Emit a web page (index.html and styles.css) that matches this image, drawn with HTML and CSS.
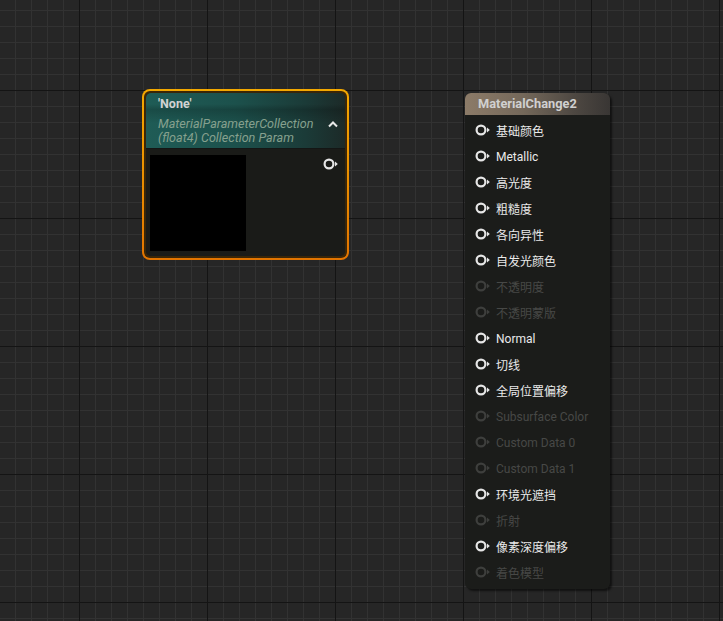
FILE: index.html
```html
<!DOCTYPE html>
<html>
<head>
<meta charset="utf-8">
<link rel="stylesheet" href="styles.css">
</head>
<body>
<div class="canvas">
  <div class="node-select">
    <div class="node-gap">
      <div class="node mpc">
        <div class="mpc-head">
          <div class="mpc-text">
            <div class="mpc-title">'None'</div>
            <div class="mpc-sub">MaterialParameterCollection<br>(float4) Collection Param</div>
          </div>
          <svg class="chev" width="12" height="8" viewBox="0 0 12 8"><path d="M2 6.5 L6 2.5 L10 6.5" fill="none" stroke="#e8e8e8" stroke-width="2"/></svg>
        </div>
        <div class="mpc-body">
          <div class="preview"></div>
          <svg class="pin out" width="16" height="12" viewBox="0 0 16 12"><circle cx="6" cy="6" r="4.4" fill="none" stroke="#e6e6e6" stroke-width="2.2"/><polygon points="12,3.5 14.8,6 12,8.5" fill="#e6e6e6"/></svg>
        </div>
      </div>
    </div>
  </div>

  <div class="node result">
    <div class="result-head">MaterialChange2</div>
    <ul class="pins">
      <li class="row"><svg class="pin" width="16" height="12" viewBox="0 0 16 12"><circle cx="6" cy="6" r="4.4"/><polygon points="12,3.5 14.8,6 12,8.5"/></svg><span class="cjk">基础颜色</span></li>
      <li class="row"><svg class="pin" width="16" height="12" viewBox="0 0 16 12"><circle cx="6" cy="6" r="4.4"/><polygon points="12,3.5 14.8,6 12,8.5"/></svg><span>Metallic</span></li>
      <li class="row"><svg class="pin" width="16" height="12" viewBox="0 0 16 12"><circle cx="6" cy="6" r="4.4"/><polygon points="12,3.5 14.8,6 12,8.5"/></svg><span class="cjk">高光度</span></li>
      <li class="row"><svg class="pin" width="16" height="12" viewBox="0 0 16 12"><circle cx="6" cy="6" r="4.4"/><polygon points="12,3.5 14.8,6 12,8.5"/></svg><span class="cjk">粗糙度</span></li>
      <li class="row"><svg class="pin" width="16" height="12" viewBox="0 0 16 12"><circle cx="6" cy="6" r="4.4"/><polygon points="12,3.5 14.8,6 12,8.5"/></svg><span class="cjk">各向异性</span></li>
      <li class="row"><svg class="pin" width="16" height="12" viewBox="0 0 16 12"><circle cx="6" cy="6" r="4.4"/><polygon points="12,3.5 14.8,6 12,8.5"/></svg><span class="cjk">自发光颜色</span></li>
      <li class="row off"><svg class="pin" width="16" height="12" viewBox="0 0 16 12"><circle cx="6" cy="6" r="4.4"/><polygon points="12,3.5 14.8,6 12,8.5"/></svg><span class="cjk">不透明度</span></li>
      <li class="row off"><svg class="pin" width="16" height="12" viewBox="0 0 16 12"><circle cx="6" cy="6" r="4.4"/><polygon points="12,3.5 14.8,6 12,8.5"/></svg><span class="cjk">不透明蒙版</span></li>
      <li class="row"><svg class="pin" width="16" height="12" viewBox="0 0 16 12"><circle cx="6" cy="6" r="4.4"/><polygon points="12,3.5 14.8,6 12,8.5"/></svg><span>Normal</span></li>
      <li class="row"><svg class="pin" width="16" height="12" viewBox="0 0 16 12"><circle cx="6" cy="6" r="4.4"/><polygon points="12,3.5 14.8,6 12,8.5"/></svg><span class="cjk">切线</span></li>
      <li class="row"><svg class="pin" width="16" height="12" viewBox="0 0 16 12"><circle cx="6" cy="6" r="4.4"/><polygon points="12,3.5 14.8,6 12,8.5"/></svg><span class="cjk">全局位置偏移</span></li>
      <li class="row off"><svg class="pin" width="16" height="12" viewBox="0 0 16 12"><circle cx="6" cy="6" r="4.4"/><polygon points="12,3.5 14.8,6 12,8.5"/></svg><span>Subsurface Color</span></li>
      <li class="row off"><svg class="pin" width="16" height="12" viewBox="0 0 16 12"><circle cx="6" cy="6" r="4.4"/><polygon points="12,3.5 14.8,6 12,8.5"/></svg><span>Custom Data 0</span></li>
      <li class="row off"><svg class="pin" width="16" height="12" viewBox="0 0 16 12"><circle cx="6" cy="6" r="4.4"/><polygon points="12,3.5 14.8,6 12,8.5"/></svg><span>Custom Data 1</span></li>
      <li class="row"><svg class="pin" width="16" height="12" viewBox="0 0 16 12"><circle cx="6" cy="6" r="4.4"/><polygon points="12,3.5 14.8,6 12,8.5"/></svg><span class="cjk">环境光遮挡</span></li>
      <li class="row off"><svg class="pin" width="16" height="12" viewBox="0 0 16 12"><circle cx="6" cy="6" r="4.4"/><polygon points="12,3.5 14.8,6 12,8.5"/></svg><span class="cjk">折射</span></li>
      <li class="row"><svg class="pin" width="16" height="12" viewBox="0 0 16 12"><circle cx="6" cy="6" r="4.4"/><polygon points="12,3.5 14.8,6 12,8.5"/></svg><span class="cjk">像素深度偏移</span></li>
      <li class="row off"><svg class="pin" width="16" height="12" viewBox="0 0 16 12"><circle cx="6" cy="6" r="4.4"/><polygon points="12,3.5 14.8,6 12,8.5"/></svg><span class="cjk">着色模型</span></li>
    </ul>
  </div>
</div>
</body>
</html>
```

FILE: styles.css
```css
html, body {
  margin: 0;
  padding: 0;
}
body {
  width: 723px;
  height: 621px;
  overflow: hidden;
  font-family: Roboto, "Noto Sans CJK SC", sans-serif;
  font-size: 12px;
}
.canvas {
  position: relative;
  width: 723px;
  height: 621px;
  background-color: #262626;
  background-image:
    linear-gradient(90deg, #141414 1px, transparent 1px),
    linear-gradient(#141414 1px, transparent 1px),
    linear-gradient(90deg, #323232 1px, transparent 1px),
    linear-gradient(#323232 1px, transparent 1px);
  background-size: 128px 128px, 128px 128px, 16px 16px, 16px 16px;
  background-position: 79px 90px, 79px 90px, 15px 10px, 15px 10px;
}

/* selected MPC node */
.node-select {
  position: absolute;
  left: 142px;
  top: 89px;
  width: 207px;
  height: 171px;
  box-sizing: border-box;
  padding: 2px;
  border-radius: 8px;
  background: linear-gradient(180deg, #f3a800 0%, #eb9000 50%, #e27400 100%);
}
.node-gap {
  height: 100%;
  box-sizing: border-box;
  padding: 2px;
  border-radius: 6px;
  background: #3a2608;
}
.node {
  border-radius: 5px;
  overflow: hidden;
  background: #1b1c1a;
}
.mpc {
  height: 100%;
  display: flex;
  flex-direction: column;
}
.mpc-head {
  height: 56px;
  box-sizing: border-box;
  padding: 3px 6px 0 12px;
  display: flex;
  justify-content: space-between;
  align-items: flex-start;
  background:
    linear-gradient(180deg, rgba(0,0,0,0) 0%, rgba(0,0,0,0) 20%, rgba(0,0,0,0.18) 30%, rgba(0,0,0,0) 55%),
    linear-gradient(90deg, #1f5c56 0%, #1c514c 45%, #1b3b38 80%, #1c2a28 100%);
  border-bottom: 1px solid #141615;
}
.mpc-title {
  color: #d2d2d2;
  font-weight: bold;
  font-size: 12.5px;
  line-height: 16px;
  height: 21px;
}
.mpc-sub {
  color: #86a08e;
  font-style: italic;
  font-size: 12.6px;
  line-height: 14px;
}
.chev {
  margin-top: 24px;
}
.mpc-body {
  flex: 1;
  display: flex;
  justify-content: space-between;
  align-items: flex-start;
  padding: 6px 6px 0 4px;
  background: #1a1b18;
}
.preview {
  width: 96px;
  height: 96px;
  background: #000;
}
.pin.out {
  margin-top: 3px;
}

/* material result node */
.result {
  position: absolute;
  left: 465px;
  top: 93px;
  width: 145px;
  height: 496px;
  border-radius: 6px;
  background: #1b1c1a;
  box-shadow: 2px 2px 2px rgba(0,0,0,0.55);
}
.result-head {
  height: 22px;
  box-sizing: border-box;
  padding-left: 13px;
  line-height: 22px;
  color: #d0d0d0;
  font-weight: bold;
  font-size: 12.8px;
  background: linear-gradient(90deg, #8c7b68 0%, #74685a 40%, #4e4842 75%, #393634 100%);
}
.pins {
  list-style: none;
  margin: 0;
  padding: 2px 0 0 0;
}
.row {
  height: 26px;
  display: flex;
  align-items: center;
  gap: 5px;
  padding-left: 10px;
  color: #eaeaea;
  font-size: 12px;
}
.row > span:not(.cjk) {
  padding-top: 2px;
}
.row .pin circle {
  fill: none;
  stroke: #e6e6e6;
  stroke-width: 2.2;
}
.row .pin polygon {
  fill: #e6e6e6;
}
.row.off {
  color: #474846;
}
.row.off .pin circle {
  stroke: #3e3f3d;
}
.row.off .pin polygon {
  fill: #3e3f3d;
}
.cjk {
  font-family: "Noto Sans CJK SC", sans-serif;
  font-size: 12px;
}
```
